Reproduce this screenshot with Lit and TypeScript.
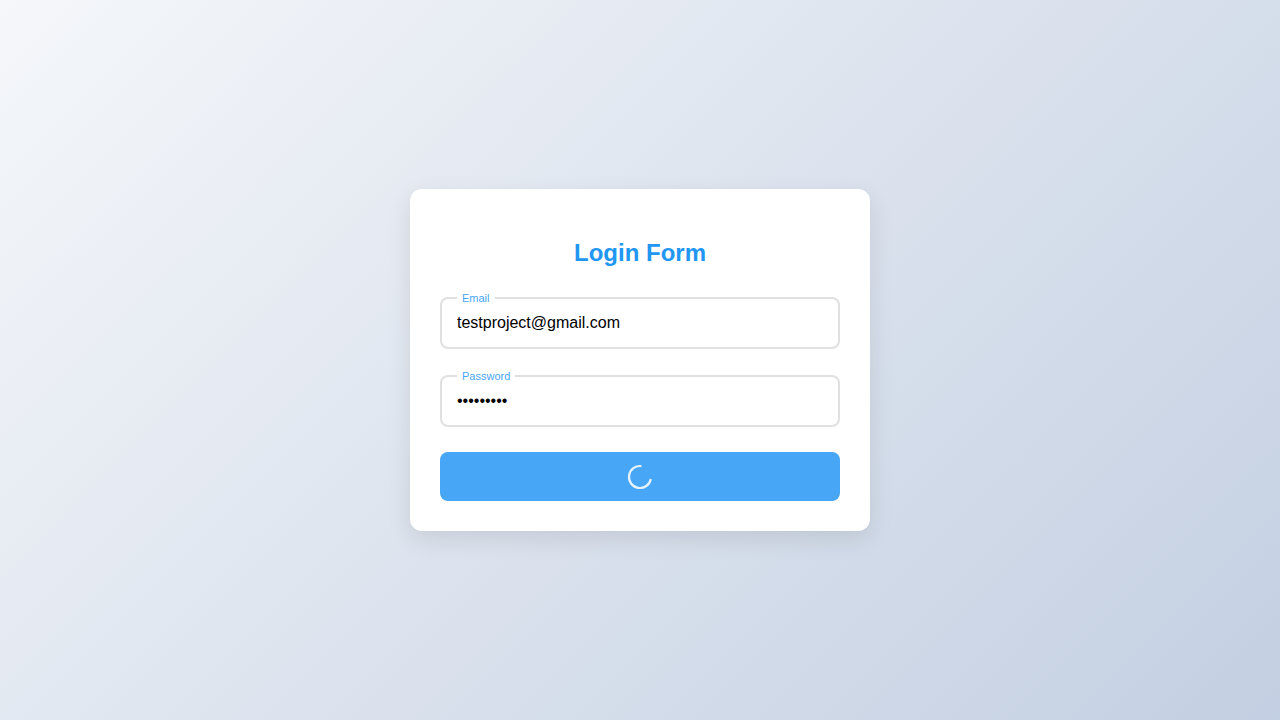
import { LitElement, html, css } from "lit";
import { customElement, state } from "lit/decorators.js";

@customElement("app-root")
export class AppRoot extends LitElement {
  @state() private email = "testproject@gmail.com";
  @state() private password = "password1";

  static styles = css`
    :host {
      display: flex;
      align-items: center;
      justify-content: center;
      min-height: 100vh;
      font-family: Arial, "Liberation Sans", sans-serif;
      background: linear-gradient(135deg, #f5f7fa 0%, #c3cfe2 100%);
    }
    .card {
      box-sizing: border-box;
      width: 100%;
      max-width: 460px;
      padding: 50px 30px 30px;
      border-radius: 12px;
      background: #fff;
      box-shadow: 0 8px 24px rgba(0, 0, 0, 0.1);
    }
    .title {
      margin: 0 0 30px;
      font-size: 24px;
      line-height: 28px;
      text-align: center;
      color: #2196f3;
    }
    .fields {
      display: grid;
      gap: 26px;
      margin-bottom: 25px;
    }
    .field {
      position: relative;
    }
    .input {
      box-sizing: border-box;
      display: block;
      width: 100%;
      height: 52px;
      padding: 15px;
      border: 2px solid #e0e0e0;
      border-radius: 8px;
      outline: none;
      background: #fff;
      color: #000;
      font-family: inherit;
      font-size: 16px;
    }
    .label {
      position: absolute;
      top: -5px;
      left: 17px;
      padding: 0 5px;
      background: #fff;
      color: #47a6f5;
      font-size: 11px;
      line-height: 13px;
    }
    .submit {
      display: flex;
      align-items: center;
      justify-content: center;
      width: 100%;
      height: 49px;
      border: 0;
      border-radius: 8px;
      background: #47a6f5;
    }
    .spinner {
      display: block;
      width: 26px;
      height: 26px;
    }
  `;

  render() {
    return html`
      <form class="card" @submit=${(e: Event) => e.preventDefault()}>
        <h2 class="title">Login Form</h2>
        <div class="fields">
          <div class="field">
            <input class="input" id="email" type="email" .value=${this.email} />
            <label class="label" for="email">Email</label>
          </div>
          <div class="field">
            <input class="input" id="password" type="password" .value=${this.password} />
            <label class="label" for="password">Password</label>
          </div>
        </div>
        <button class="submit" type="submit" aria-label="Logging in">
          <svg class="spinner" viewBox="0 0 26 26" fill="none" aria-hidden="true">
            <path d="M14.4 2.1A11 11 0 1 0 23.8 15" stroke="#e6f3fe" stroke-width="2.2" />
          </svg>
        </button>
      </form>
    `;
  }
}
